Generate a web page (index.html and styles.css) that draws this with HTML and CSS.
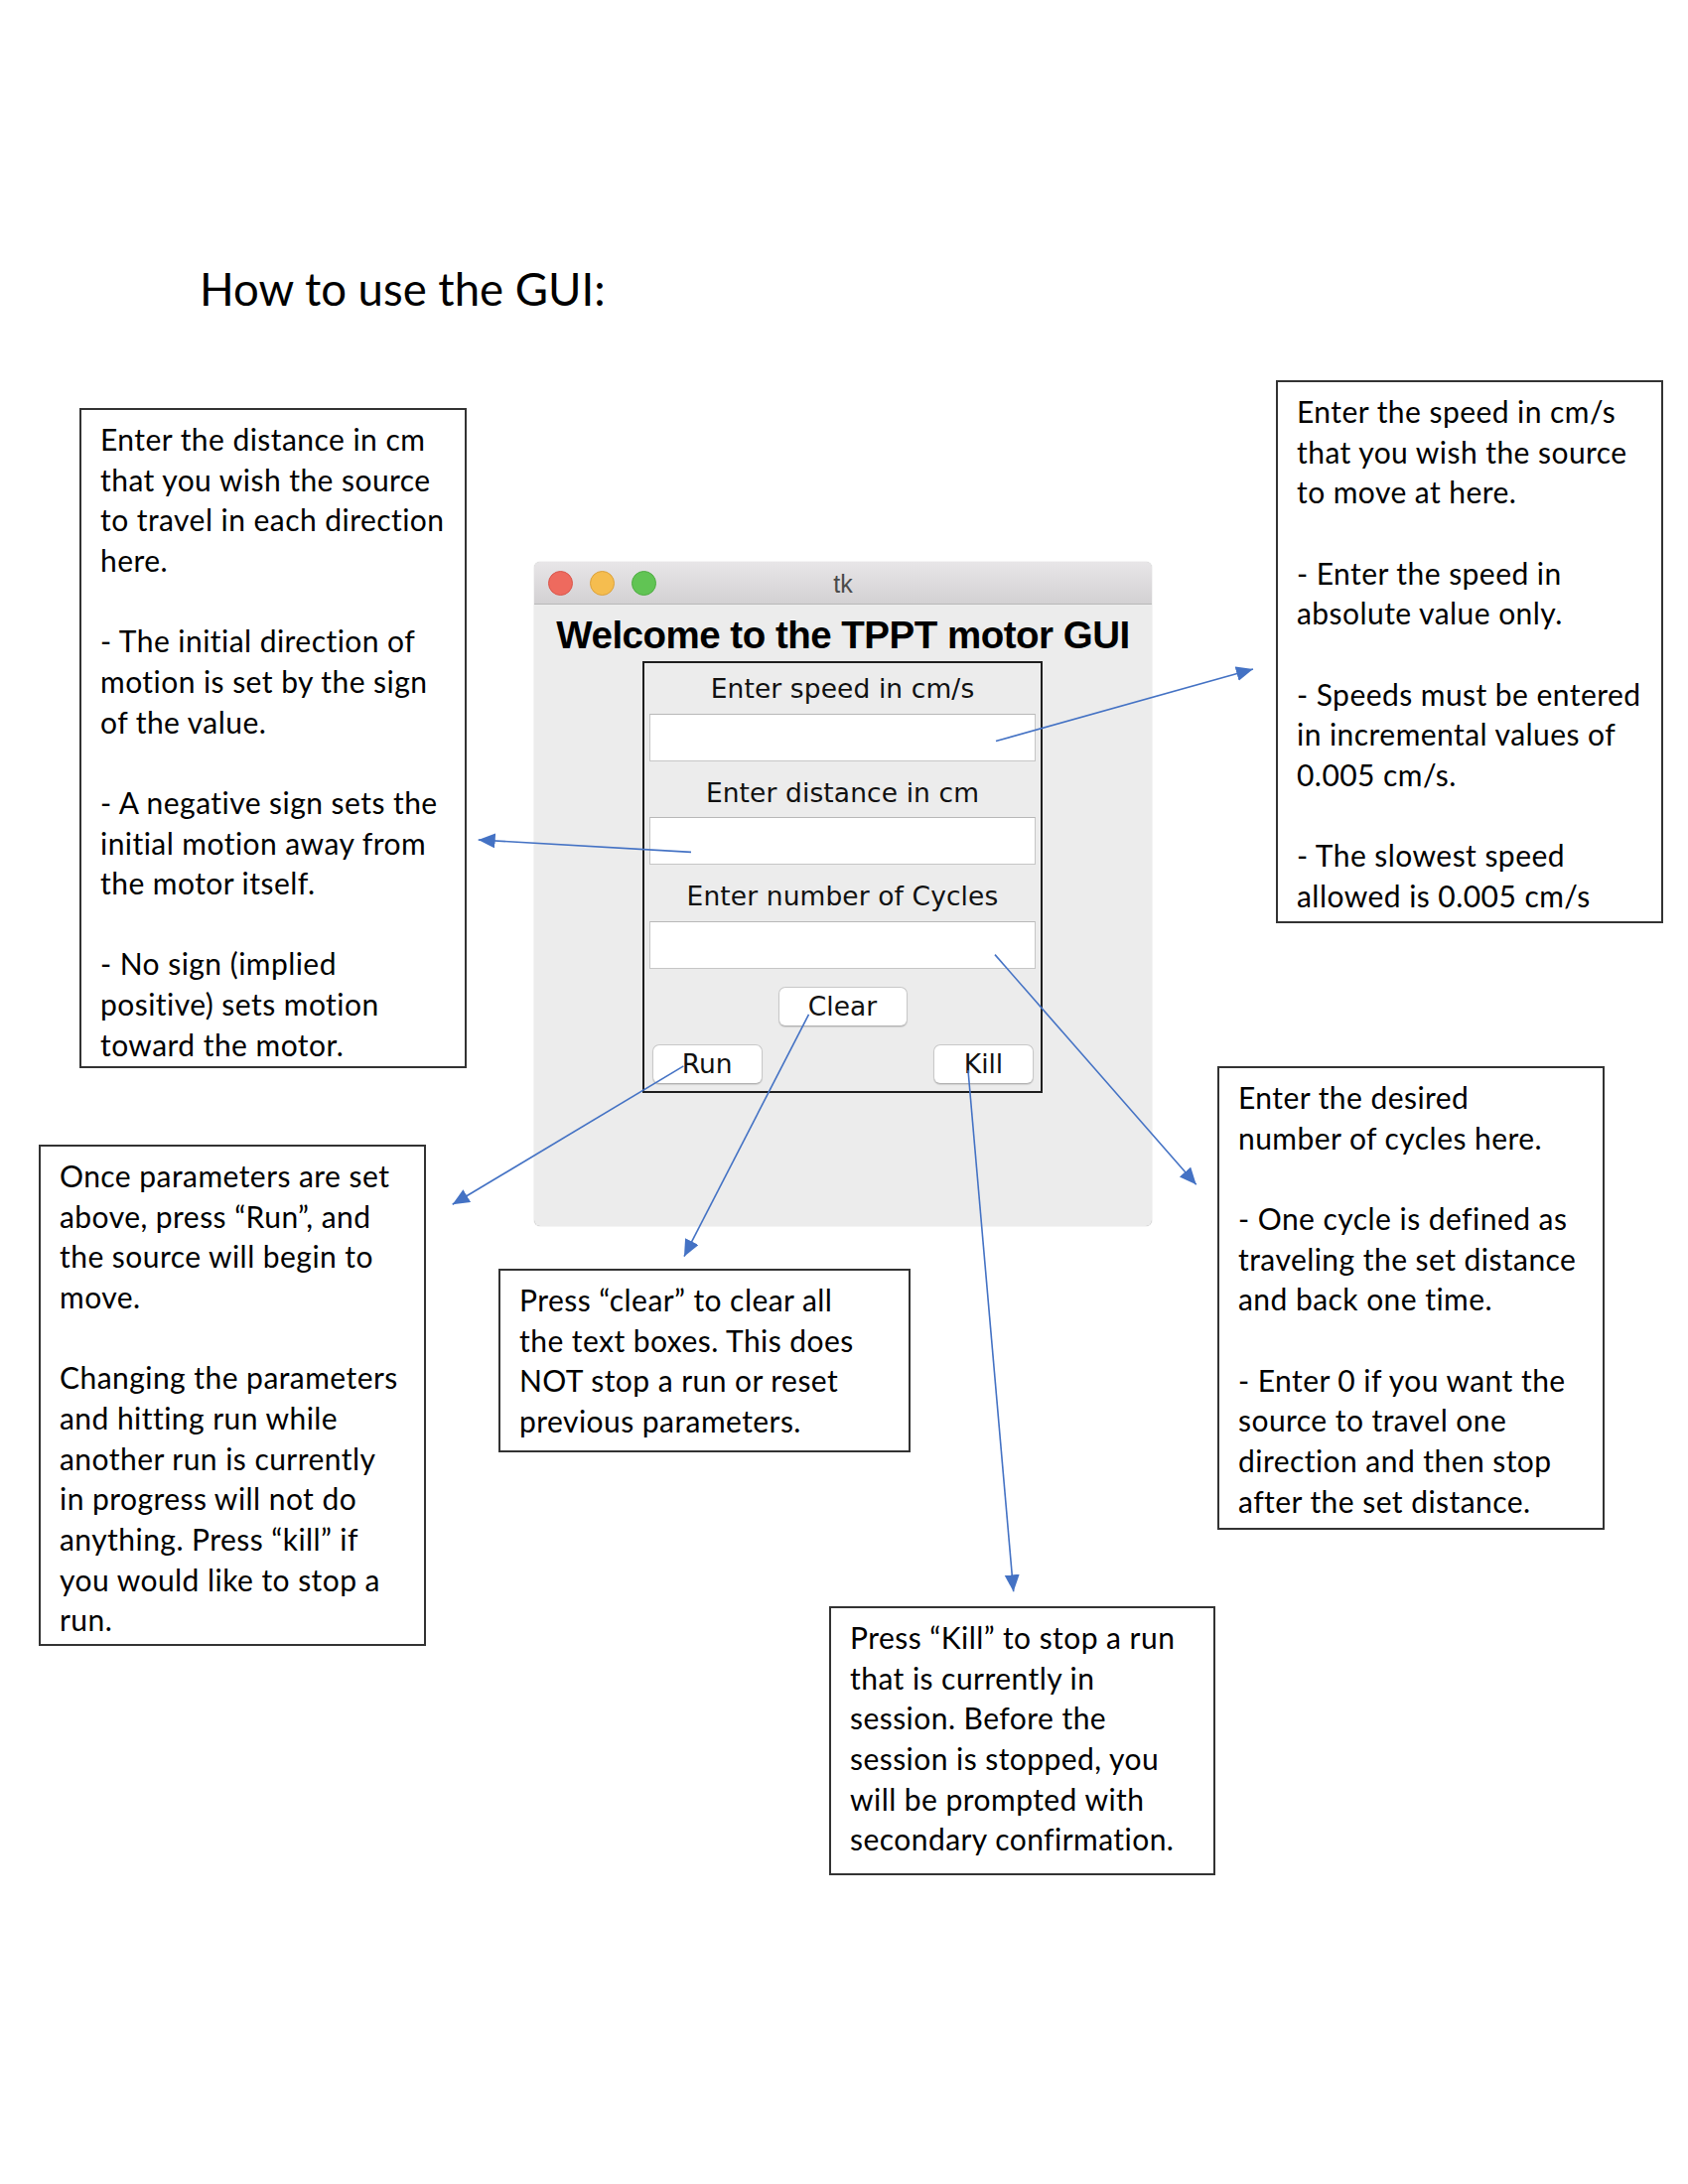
FILE: index.html
```html
<!DOCTYPE html>
<html lang="en">
<head>
<meta charset="utf-8">
<title>How to use the GUI</title>
<link rel="stylesheet" href="styles.css">
</head>
<body>
<div class="page">
  <h1 class="title">How to use the GUI:</h1>

  <div class="note note-distance">
    <p>Enter the distance in cm<br>that you wish the source<br>to travel in each direction<br>here.</p>
    <p>- The initial direction of<br>motion is set by the sign<br>of the value.</p>
    <p>- A negative sign sets the<br>initial motion away from<br>the motor itself.</p>
    <p>- No sign (implied<br>positive) sets motion<br>toward the motor.</p>
  </div>

  <div class="note note-speed">
    <p>Enter the speed in cm/s<br>that you wish the source<br>to move at here.</p>
    <p>- Enter the speed in<br>absolute value only.</p>
    <p>- Speeds must be entered<br>in incremental values of<br>0.005 cm/s.</p>
    <p>- The slowest speed<br>allowed is 0.005 cm/s</p>
  </div>

  <div class="note note-run">
    <p>Once parameters are set<br>above, press “Run”, and<br>the source will begin to<br>move.</p>
    <p>Changing the parameters<br>and hitting run while<br>another run is currently<br>in progress will not do<br>anything. Press “kill” if<br>you would like to stop a<br>run.</p>
  </div>

  <div class="note note-clear">
    <p>Press “clear” to clear all<br>the text boxes. This does<br>NOT stop a run or reset<br>previous parameters.</p>
  </div>

  <div class="note note-cycles">
    <p>Enter the desired<br>number of cycles here.</p>
    <p>- One cycle is defined as<br>traveling the set distance<br>and back one time.</p>
    <p>- Enter 0 if you want the<br>source to travel one<br>direction and then stop<br>after the set distance.</p>
  </div>

  <div class="note note-kill">
    <p>Press “Kill” to stop a run<br>that is currently in<br>session. Before the<br>session is stopped, you<br>will be prompted with<br>secondary confirmation.</p>
  </div>

  <div class="window">
    <div class="titlebar">
      <div class="lights">
        <span class="light light-red"></span>
        <span class="light light-yellow"></span>
        <span class="light light-green"></span>
      </div>
      <span class="wtitle">tk</span>
      <span></span>
    </div>
    <div class="wbody">
      <div class="heading">Welcome to the TPPT motor GUI</div>
      <div class="frame">
        <div class="label">Enter speed in cm/s</div>
        <div class="entry"></div>
        <div class="label label-next">Enter distance in cm</div>
        <div class="entry"></div>
        <div class="label label-next">Enter number of Cycles</div>
        <div class="entry"></div>
        <div class="row-center"><div class="btn btn-clear">Clear</div></div>
        <div class="row-split"><div class="btn btn-run">Run</div><div class="btn btn-kill">Kill</div></div>
      </div>
    </div>
  </div>

  <svg class="arrows" width="1700" height="2200" viewBox="0 0 1700 2200">
    <defs>
      <marker id="head" markerUnits="userSpaceOnUse" markerWidth="18" markerHeight="16" refX="17" refY="7.5" orient="auto">
        <path d="M0,0 L17,7.5 L0,15 Z" fill="#4472c4"/>
      </marker>
    </defs>
    <line x1="1003" y1="746.5" x2="1262" y2="674" marker-end="url(#head)"/>
    <line x1="696" y1="858.4" x2="481.7" y2="846" marker-end="url(#head)"/>
    <line x1="1002" y1="961.6" x2="1204.7" y2="1193.3" marker-end="url(#head)"/>
    <line x1="688.4" y1="1073.9" x2="455.7" y2="1213.3" marker-end="url(#head)"/>
    <line x1="814.5" y1="1021.8" x2="689" y2="1265.7" marker-end="url(#head)"/>
    <line x1="975" y1="1078.2" x2="1020.7" y2="1603.3" marker-end="url(#head)"/>
  </svg>
</div>
</body>
</html>
```

FILE: styles.css
```css
html, body {
  margin: 0;
  padding: 0;
  background: #ffffff;
}

.page {
  position: relative;
  width: 1700px;
  height: 2200px;
  overflow: hidden;
  padding-top: 264px;
  box-sizing: border-box;
  font-family: Lato, "Open Sans", sans-serif;
  color: #000;
}

.title {
  margin: 0 0 0 201px;
  font-family: Lato, sans-serif;
  font-weight: 400;
  font-size: 45.5px;
  line-height: 1.2;
}

/* annotation boxes (diagram nodes) */
.note {
  position: absolute;
  box-sizing: border-box;
  border: 2px solid #333;
  background: #fff;
  padding: 9px 0 0 19px;
  font-family: Lato, sans-serif;
  font-size: 30px;
  letter-spacing: 0.45px;
  line-height: 40.65px;
  white-space: nowrap;
}

.note p {
  margin: 0 0 40.65px 0;
}

.note p:last-child {
  margin-bottom: 0;
}

.note-distance { left: 80px;   top: 411px;  width: 390px; height: 665px; }
.note-speed    { left: 1285px; top: 383px;  width: 390px; height: 547px; }
.note-run      { left: 39px;   top: 1153px; width: 390px; height: 505px; }
.note-clear    { left: 502px;  top: 1278px; width: 415px; height: 185px; }
.note-cycles   { left: 1226px; top: 1074px; width: 390px; height: 467px; }
.note-kill     { left: 835px;  top: 1618px; width: 389px; height: 271px; }

/* screenshot of the tk window */
.window {
  position: absolute;
  left: 538px;
  top: 566px;
  width: 622px;
  height: 669px;
  background: #ececec;
  border-radius: 6px;
  box-shadow: 0 0 1px rgba(0, 0, 0, 0.45);
  display: flex;
  flex-direction: column;
  overflow: hidden;
}

.titlebar {
  height: 43px;
  box-sizing: border-box;
  border-bottom: 1px solid #b9b9b9;
  background: linear-gradient(#e8e6e8, #d3d1d3);
  display: grid;
  grid-template-columns: 1fr auto 1fr;
  align-items: center;
}

.lights {
  display: flex;
  gap: 17px;
  padding-left: 14px;
}

.light {
  width: 25px;
  height: 25px;
  border-radius: 50%;
  box-sizing: border-box;
}

.light-red    { background: #ee6a5e; border: 1px solid #d9564b; }
.light-yellow { background: #f5bd4f; border: 1px solid #dca23b; }
.light-green  { background: #61c454; border: 1px solid #4fad43; }

.wtitle {
  font-family: "Liberation Sans", Arial, sans-serif;
  font-size: 25px;
  color: #4a4a4a;
  line-height: 1;
  padding-top: 2px;
}

.wbody {
  flex: 1;
  display: flex;
  flex-direction: column;
  align-items: center;
}

.heading {
  margin-top: 11px;
  margin-bottom: 6px;
  font-family: "Liberation Sans", Arial, sans-serif;
  font-weight: 700;
  font-size: 38.5px;
  letter-spacing: -0.5px;
  line-height: 40px;
  color: #000;
  white-space: nowrap;
}

.frame {
  width: 403px;
  box-sizing: border-box;
  border: 2px solid #1e1e1e;
  padding: 11px 0 7px;
  display: flex;
  flex-direction: column;
  align-items: center;
  margin-left: -1px;
}

.label {
  font-family: "DejaVu Sans", sans-serif;
  font-size: 26.5px;
  line-height: 30px;
  color: #111;
  letter-spacing: 0.1px;
}

.label-next {
  margin-top: 17px;
}

.entry {
  width: 389px;
  height: 48px;
  margin-top: 9.5px;
  box-sizing: border-box;
  background: #fff;
  border: 1px solid #c6c6c6;
  border-top-color: #b8b8b8;
}

.row-center {
  width: 100%;
  display: flex;
  justify-content: center;
  margin-top: 18px;
}

.row-split {
  width: 100%;
  box-sizing: border-box;
  display: flex;
  justify-content: space-between;
  padding: 0 7px 0 7.5px;
  margin-top: 17.5px;
}

.btn {
  height: 40.5px;
  box-sizing: border-box;
  background: #fff;
  border: 1px solid #c8c8c8;
  border-bottom-color: #b2b2b2;
  border-radius: 7px;
  box-shadow: 0 1px 1px rgba(0, 0, 0, 0.12);
  font-family: "DejaVu Sans", sans-serif;
  font-size: 26.5px;
  line-height: 38px;
  color: #111;
  text-align: center;
}

.btn-clear { width: 130px; }
.btn-run   { width: 111.5px; }
.btn-kill  { width: 101px; }

/* connector arrows */
.arrows {
  position: absolute;
  left: 0;
  top: 0;
  pointer-events: none;
}

.arrows line {
  stroke: #4472c4;
  stroke-width: 1.6;
}
```
